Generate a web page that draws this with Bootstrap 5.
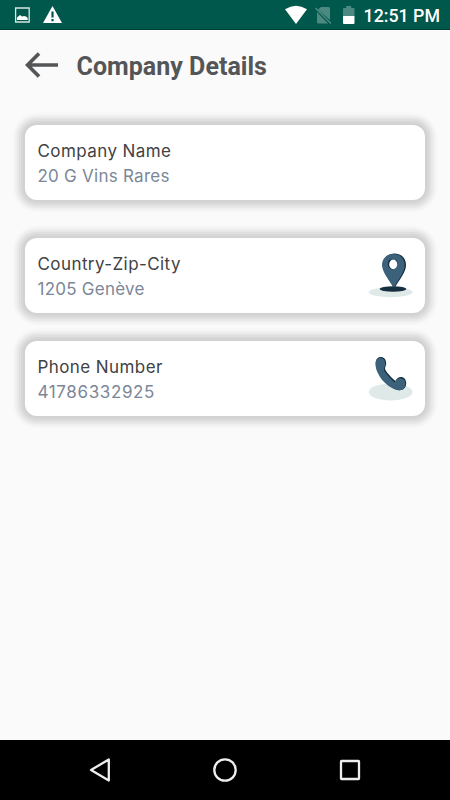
<!DOCTYPE html>
<html lang="en">
<head>
<meta charset="utf-8">
<meta name="viewport" content="width=device-width, initial-scale=1">
<title>Company Details</title>
<link href="https://cdn.jsdelivr.net/npm/bootstrap@5.3.0/dist/css/bootstrap.min.css" rel="stylesheet">
<style>
body{background:#fafafa;font-family:Inter,"Liberation Sans",sans-serif;height:100vh;overflow:hidden}
svg{display:block;flex:none}
.status-bar{height:30px;background:#00574b;border-bottom:1px solid #003f34;padding:0 10px 0 14px;color:#fff}
.clock{font:500 17.8px/30px Roboto,sans-serif;margin-left:7px;padding-top:2px;white-space:nowrap}
.title-bar{height:71px;padding-left:25px;gap:18.500px}
.back-arrow{margin-top:-2px}
.page-title{font:700 25px/30px Roboto,sans-serif;color:#545557;white-space:nowrap;padding-top:2px;letter-spacing:.03px}
.cards{padding:24px 25px 0}
.info-card{height:75px;border:0;border-radius:12px;padding:0 12px 0 12.500px;background:#fff;
box-shadow:0 0 0 2px #d2d2d2,0 0 0 4px #d7d7d7,0 0 0 6px #dfdfdf,0 0 0 8px #e8e8e8,0 0 0 10px #f0f0f0,0 0 1px 12px #f6f6f6}
.card-lines{padding-top:3px}
.first-gap{margin-bottom:37.500px}
.second-gap{margin-bottom:28.500px}
.field-label{font-size:17px;line-height:25px;color:#414244;letter-spacing:.42px;white-space:nowrap}
.field-value{font-size:17px;line-height:25px;color:#7b8798;letter-spacing:.25px;white-space:nowrap}
.digits{letter-spacing:.63px}
.nav-keys{height:60px;background:#000;padding:0 88px}
</style>
<script src="https://cdn.jsdelivr.net/npm/bootstrap@5.3.0/dist/js/bootstrap.bundle.min.js"></script>
</head>
<body class="d-flex flex-column">
<header class="status-bar d-flex align-items-center justify-content-between">
  <div class="d-flex">
    <svg width="60" height="30" viewBox="14 0 60 30">
      <path d="M15.600 8h13.600v14H15.600z" fill="none" stroke="#d9e6e3" stroke-width="1.300"/>
      <path d="M17 20v-2.500l3-2.500 2 1.500 2-.5 2 .5 1.700 1.500v2z" fill="#fff"/>
      <path d="M52.500 6 62 23H43z" fill="#fff"/>
      <path d="M52.500 11.500v6M52.500 19v2.200" stroke="#00574b" stroke-width="2.200"/>
    </svg>
  </div>
  <div class="d-flex align-items-center">
    <svg width="74" height="30" viewBox="284 0 74 30">
      <path d="M286 9.300q11-7 22 0L297 24z" fill="#fff"/>
      <path d="M322 7h7.500q1.500 0 1.500 1.500V20L319 9.500zM318 12l11 11.500h-9.500q-1.500 0-1.500-1.500z" fill="#4c8a81"/>
      <path d="M316.500 8 332 23.500" stroke="#4c8a81" stroke-width="1.500"/>
      <path d="M344 16V9q0-1 1-1h2.200V6h5v2h2.300q1 0 1 1v7z" fill="#4c8a81"/>
      <path d="M344 16h11.500v7q0 1-1 1H345q-1 0-1-1z" fill="#fff"/>
    </svg>
    <span class="clock">12:51 PM</span>
  </div>
</header>
<main class="flex-grow-1">
  <div class="title-bar d-flex align-items-center">
    <svg class="back-arrow" width="33" height="26" viewBox="0 0 33 26"><path d="M33 13H3M14 1.500 2.500 13 14 24.500" fill="none" stroke="#545557" stroke-width="3.700"/></svg>
    <h1 class="page-title m-0">Company Details</h1>
  </div>
  <div class="cards">
    <section class="card info-card first-gap flex-row align-items-center justify-content-between">
      <div class="card-lines"><div class="field-label">Company Name</div><div class="field-value">20 G Vins Rares</div></div>
    </section>
    <section class="card info-card second-gap flex-row align-items-center justify-content-between">
      <div class="card-lines"><div class="field-label">Country-Zip-City</div><div class="field-value">1205 Genève</div></div>
      <svg width="45" height="75" viewBox="368 237.500 45 75">
        <ellipse cx="390.700" cy="291.800" rx="21.800" ry="5" fill="#dfe9e8"/>
        <ellipse cx="393" cy="288.500" rx="13.300" ry="2.800" fill="#173041"/>
        <path d="M394.500 253c7 0 11.500 5 11.500 11.500 0 7-6 14-11.800 23.500-5.700-9.500-11.200-16.500-11.200-23.500 0-6.500 4.500-11.500 11.500-11.500z" fill="#132c3c"/>
        <path d="M393.200 253.500c7 0 11.500 4.800 11.500 11 0 6.700-5.500 13.500-10.900 22.500-5.500-9-11.800-15.800-11.800-22.500 0-6.200 4.700-11 11.200-11z" fill="#3b627a"/>
        <ellipse cx="392.600" cy="263.600" rx="4.800" ry="5.300" fill="#132c3c"/>
        <ellipse cx="393.200" cy="263.900" rx="4" ry="4.800" fill="#fff"/>
      </svg>
    </section>
    <section class="card info-card flex-row align-items-center justify-content-between">
      <div class="card-lines"><div class="field-label">Phone Number</div><div class="field-value digits">41786332925</div></div>
      <svg width="45" height="75" viewBox="368 341 45 75">
        <ellipse cx="390.700" cy="392" rx="21.800" ry="8.500" fill="#dfe9e8"/>
        <path d="M375.800 362c.2-3.500 2.800-5.200 5.300-5 3.500.3 5 3.200 5.100 6.300.1 2.300-1.300 3.800-1.200 5.700 1.500 3.500 6.500 8.800 10.500 12 1.300-2.900 3.600-4.300 6-4 3.200.4 5 3.600 4.700 7-.3 3.800-3.300 6.500-7 6.200-4.500-.4-9.700-4-13.600-7.700-5-4.700-10.300-13.500-9.800-20.500z" fill="#132c3c"/>
        <path d="M375.500 363c.2-3.500 2.500-5.200 5-5 3.500.3 4.700 3 4.800 6.100.1 2.300-1.500 3.800-1.400 5.700 1.500 3.500 6.800 9.300 10.800 12.500 1.300-2.900 3.600-4.300 6-4 3.200.4 5 2.800 4.700 6.200-.3 3.600-3 6-6.700 5.700-4.500-.4-9.700-3.500-13.600-7.200-5-4.700-10.100-13-9.600-20z" fill="#3b627a"/>
      </svg>
    </section>
  </div>
</main>
<footer class="nav-keys d-flex align-items-center justify-content-between">
  <svg width="24" height="26" viewBox="0 0 24 26"><path d="M20.800 2.500v21L3 13z" fill="none" stroke="#eee" stroke-width="2.300" stroke-linejoin="round"/></svg>
  <svg width="26" height="26" viewBox="0 0 26 26"><circle cx="13" cy="13" r="10.700" fill="none" stroke="#eee" stroke-width="2.300"/></svg>
  <svg width="24" height="24" viewBox="0 0 24 24"><rect x="3" y="3" width="18" height="18" rx=".5" fill="none" stroke="#eee" stroke-width="2.300"/></svg>
</footer>
</body>
</html>
